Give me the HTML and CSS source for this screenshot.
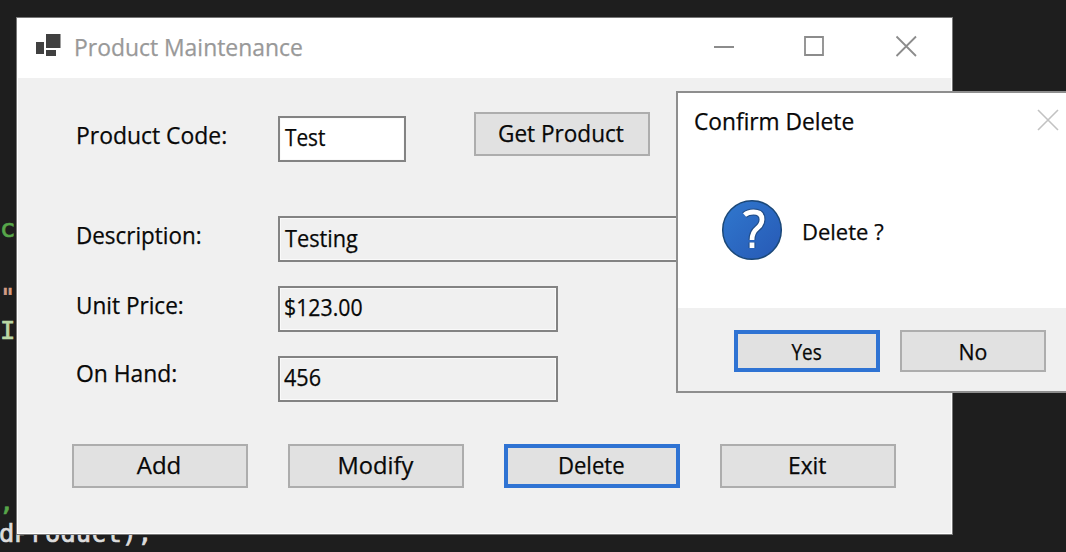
FILE: index.html
```
<!DOCTYPE html>
<html lang="en">
<head>
<meta charset="utf-8">
<title>Product Maintenance</title>
<link rel="stylesheet" href="styles.css">
</head>
<body>
<main class="desktop">
  <span class="code code-comment">c</span>
  <span class="code code-string">"</span>
  <span class="code code-type">I</span>
  <span class="code code-tick">,</span>
  <span class="code code-call">dProduct);</span>

  <section class="window">
    <header class="titlebar">
      <svg class="app-icon" width="26" height="24" viewBox="0 0 26 24">
        <path d="M0 9h8v12h-8zM10 1h14.500v14H10zM10 17h10v6H10z"/>
      </svg>
      <h1 class="title"><span class="t w-title">Product Maintenance</span></h1>
      <svg class="controls" width="204" height="22" viewBox="0 0 204 22">
        <path d="M0 12h20M91 2h18v18H91zM182.500 1.500l19.500 19.500M202 1.500L182.500 21"/>
      </svg>
    </header>
    <form class="form">
      <div class="row row-code">
        <label class="label"><span class="t w-code">Product Code:</span></label>
        <div class="field field-code"><span class="t w-test">Test</span></div>
        <button type="button" class="button get"><span class="t w-get">Get Product</span></button>
      </div>
      <div class="row row-description">
        <label class="label"><span class="t w-desc">Description:</span></label>
        <div class="field field-description"><span class="t w-testing">Testing</span></div>
      </div>
      <div class="row row-price">
        <label class="label"><span class="t w-unit">Unit Price:</span></label>
        <div class="field"><span class="t w-price">$123.00</span></div>
      </div>
      <div class="row row-hand">
        <label class="label label-hand"><span class="t w-hand">On Hand:</span></label>
        <div class="field"><span class="t w-456">456</span></div>
      </div>
      <div class="actions">
        <button type="button" class="button"><span class="t w-add">Add</span></button>
        <button type="button" class="button"><span class="t w-modify">Modify</span></button>
        <button type="button" class="button focused"><span class="t w-delete">Delete</span></button>
        <button type="button" class="button"><span class="t w-exit">Exit</span></button>
      </div>
    </form>
  </section>

  <section class="dialog">
    <header class="dialog-title">
      <h2 class="title"><span class="t w-confirm">Confirm Delete</span></h2>
      <svg class="dialog-close" width="22" height="22" viewBox="0 0 22 22"><path d="M1 1l20 20M21 1L1 21"/></svg>
    </header>
    <div class="message">
      <svg class="question" width="62" height="62" viewBox="0 0 62 62">
        <defs><linearGradient id="blue" x1="0" y1="0" x2="1" y2="1"><stop offset="0" stop-color="#3078ce"/><stop offset="1" stop-color="#2759b5"/></linearGradient></defs>
        <circle cx="31" cy="31" r="29.300" fill="url(#blue)" stroke="#1b4878" stroke-width="1.500"/>
        <g class="mark-edge"><path d="M23.500 16Q27 13 32.500 13Q41 13 41 20.500Q41 25.500 36 29.500Q31 33.500 31 41"/><path d="M31 43.500v5.500"/></g>
        <g class="mark"><path d="M23.500 16Q27 13 32.500 13Q41 13 41 20.500Q41 25.500 36 29.500Q31 33.500 31 41"/><path d="M31 43.500v5.500"/></g>
      </svg>
      <p class="prompt"><span class="t w-prompt">Delete ?</span></p>
    </div>
    <footer class="dialog-actions">
      <button type="button" class="button small focused"><span class="t w-yes">Yes</span></button>
      <button type="button" class="button small"><span class="t w-no">No</span></button>
    </footer>
  </section>
</main>
</body>
</html>
```
FILE: styles.css
```
* { box-sizing: border-box; }
body { margin: 0; background: #1e1e1e; font: 24px/32px "Open Sans", sans-serif; color: #080808; overflow: hidden; }
h1, h2, p { margin: 0; font-size: inherit; font-weight: 400; }
.desktop { position: relative; width: 1066px; height: 552px; overflow: hidden; background: #1e1e1e; }
.t { display: inline-block; white-space: pre; transform-origin: 0 50%; -webkit-text-stroke: .25px currentColor; }

/* Condensed label widths */
.w-title { transform: scaleX(.954); }
.w-code { transform: scaleX(.955); }
.w-get { transform: scaleX(.94); }
.w-desc { transform: scaleX(.934); }
.w-unit { transform: scaleX(.94); }
.w-hand { transform: scaleX(.953); }
.w-test { transform: scaleX(.865); }
.w-testing { transform: scaleX(.905); }
.w-price { transform: scaleX(.886); }
.w-456 { transform: scaleX(.9); }
.w-modify { transform: scaleX(.985); }
.w-delete { transform: scaleX(.92); }
.w-exit { transform: scaleX(.95); }
.w-confirm { transform: scaleX(.947); }
.w-yes { transform: scaleX(.86); }
.w-no { transform: scaleX(.97); }

/* Editor text showing around the windows */
.code { position: absolute; font: 25.500px/30px "DejaVu Sans Mono", monospace; -webkit-text-stroke: .7px currentColor; }
.code-comment { left: 0; top: 213px; color: #57a64a; }
.code-string { left: 0; top: 282px; color: #d69d85; }
.code-type { left: 0; top: 315px; color: #b8d7a3; }
.code-tick { left: -1px; top: 487px; color: #57a64a; }
.code-call { left: -1px; top: 518px; color: #dcdcdc; }

.window { position: absolute; left: 16px; top: 17px; width: 937px; height: 518px; border: 1px solid #777; background: #f0f0f0; box-shadow: inset 0 0 0 1px #fff; }
.titlebar { display: flex; align-items: flex-start; height: 60px; padding: 0 34px 0 19px; background: #fff; }
.app-icon { margin-top: 15px; fill: #404040; }
.titlebar .title { margin: 13px 0 0 12px; color: #999; }
.controls { margin: 17px 0 0 auto; fill: none; stroke: #8c8c8c; stroke-width: 1.800; }

.form { padding: 34px 0 0 55px; }
.row { display: flex; align-items: flex-start; }
.label { width: 206px; height: 32px; padding-left: 4px; margin-top: 3px; }
.label-hand { margin-top: 1px; }
.field { width: 280px; height: 46px; padding: 4px 5px; border: 2px solid #838383; box-shadow: inset 0 0 0 1px #fafafa; }
.field-code { width: 128px; padding-top: 3px; background: #fff; }
.row-code { height: 104px; }
.row-code .field { margin-top: 4px; }
.row-code .label { margin-top: 7px; }
.row-code .get { margin-left: 68px; }
.row-description, .row-price { height: 70px; }
.row-price .field, .row-hand .field { padding-left: 4px; padding-top: 3px; }
.row-hand { height: 88px; }
.field-description { width: 618px; }
.actions { display: flex; gap: 40px; }
.button { display: flex; justify-content: center; width: 176px; height: 44px; padding: 3px 2px 0 0; border: 2px solid #adadad; border-radius: 0; background: #e1e1e1; color: inherit; font: inherit; align-items: flex-start; }
.button .t { transform-origin: 50% 50%; }
.button.focused { border: 4px solid #2f73d3; padding-top: 1px; }

.dialog { position: absolute; left: 676px; top: 91px; width: 420px; height: 302px; border: 2px solid #8e8e8e; background: #fff; }
.dialog-title { display: flex; width: 418px; height: 105px; padding: 12px 37px 0 16px; }
.dialog-close { margin: 4px 0 0 auto; fill: none; stroke: #c2c2c2; stroke-width: 1.600; }
.message { display: flex; height: 110px; padding-left: 43px; }
.question { margin-top: 1px; }
.mark, .mark-edge { fill: none; stroke: #fff; stroke-width: 4.800; }
.mark-edge { stroke: #214d87; stroke-width: 7; }
.prompt { margin: 17px 0 0 19px; font-size: 22px; }
.dialog-actions { display: flex; gap: 20px; height: 83px; padding: 22px 0 0 56px; background: #f0f0f0; }
.button.small { width: 146px; height: 42px; font-size: 22px; padding: 3px 0 0; }
.button.small.focused { padding-top: 1px; }
```
